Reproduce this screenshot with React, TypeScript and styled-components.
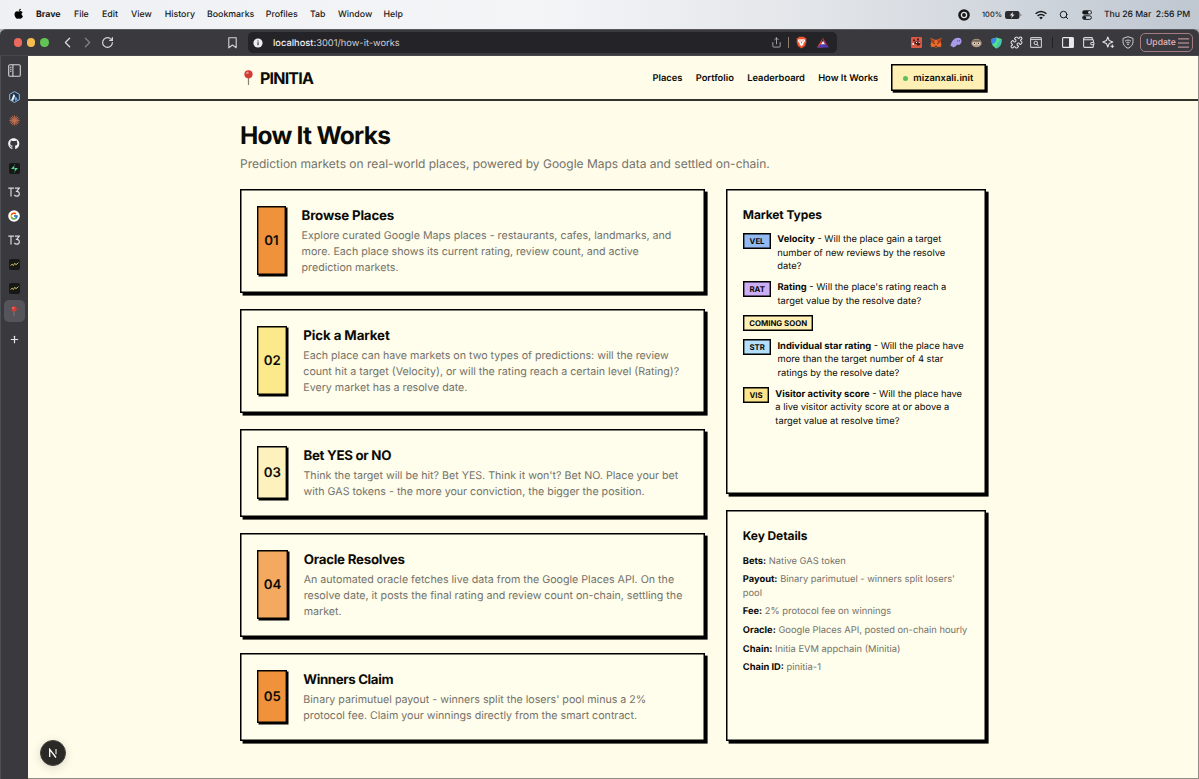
import React from "react";
import styled, { createGlobalStyle } from "styled-components";
import {
  ChevronLeft, ChevronRight, RotateCw, Share, Puzzle,
  Wallet, Search, Plus,
} from "lucide-react";
import { FaApple, FaGithub } from "react-icons/fa";
import { FcGoogle } from "react-icons/fc";

const GlobalStyle = createGlobalStyle`
  *, *::before, *::after { box-sizing: border-box; }
  html, body { margin: 0; padding: 0; overflow: hidden; background: #3a393e; }
  body {
    font-family: Inter, "Liberation Sans", sans-serif;
    color: #0b0b08;
    text-rendering: geometricPrecision;
    -webkit-font-smoothing: antialiased;
  }
  h1, h2, p { margin: 0; }
  svg { display: block; flex: none; }
`;

const Screen = styled.div`
  width: 1199px;
  height: 779px;
  display: flex;
  flex-direction: column;
`;

/* ---------- system menu bar ---------- */
const MenuBar = styled.div`
  height: 29px;
  flex: none;
  display: flex;
  align-items: center;
  padding: 0 11px 0 13px;
  background: linear-gradient(90deg, #eff0f3 0%, #f4f5f7 45%, #e2e5e9 68%, #bfc7d1 100%);
  font-size: 8.8px;
  color: #17181a;
`;
const MenuItem = styled.span<{ $w: number; $bold?: boolean }>`
  width: ${(p) => p.$w}px;
  font-weight: ${(p) => (p.$bold ? 700 : 500)};
  white-space: nowrap;
`;
const AppleCell = styled.span`
  width: 23px;
  padding-bottom: 1px;
`;
const MenuStatus = styled.div`
  margin-left: auto;
  display: flex;
  align-items: center;
`;
const StatusCell = styled.span<{ $gap: number }>`
  margin-right: ${(p) => p.$gap}px;
  font-size: 7.4px;
  font-weight: 500;
`;
const Clock = styled.span`
  width: 84px;
  font-weight: 500;
  font-size: 8.7px;
  letter-spacing: -0.05px;
  white-space: pre;
`;

/* ---------- browser tool bar ---------- */
const Toolbar = styled.div`
  height: 27px;
  flex: none;
  display: flex;
  align-items: center;
  padding: 0 6px 0 11px;
  background: #3a393e;
  border-top: 1px solid #57565b;
  border-bottom: 1px solid #48474b;
  border-radius: 6px 6px 0 0;
  color: #dcdce0;
`;
const ToolbarBack = styled.div`
  background: #a9b0b9;
  flex: none;
`;
const Light = styled.span<{ $c: string }>`
  width: 8.4px;
  height: 8.4px;
  margin: 0 2.5px;
  border-radius: 50%;
  background: ${(p) => p.$c};
`;
const Cell = styled.span<{ $dim?: boolean }>`
  width: 20px;
  display: flex;
  flex: none;
  justify-content: center;
  align-items: center;
  opacity: ${(p) => (p.$dim ? 0.45 : 1)};
`;
const Lights = styled.div`
  display: flex;
  width: 46px;
  align-items: center;
`;
const NavGroup = styled.div`
  display: flex;
  width: 165px;
`;
const AddressBar = styled.div`
  width: 589px;
  height: 21px;
  margin-left: 6px;
  display: flex;
  align-items: center;
  background: #242328;
  border-radius: 5px;
  padding: 0 4px 0 5px;
`;
const Url = styled.span`
  font-size: 9.3px;
  margin-left: 10px;
  padding-top: 1px;
  color: #cfced3;
  b { font-weight: 500; color: #f0eff3; }
`;
const AddressTools = styled.div`
  margin-left: auto;
  display: flex;
  align-items: center;
  gap: 2px;
`;
const Rule = styled.span<{ $h: number; $c: string }>`
  width: 1px;
  height: ${(p) => p.$h}px;
  background: ${(p) => p.$c};
`;
const Extensions = styled.div`
  display: flex;
  align-items: center;
  margin-left: auto;
`;
const ExtensionRule = styled(Rule)`
  margin: 0 5px 0 6px;
`;
const UpdateButton = styled.span`
  width: 53px;
  height: 19px;
  margin-left: 2px;
  display: flex;
  align-items: center;
  justify-content: space-between;
  padding: 0 3px 0 5px;
  border: 1px solid #a47c82;
  border-radius: 5px;
  font-size: 8.6px;
  font-weight: 500;
  color: #e3b4ba;
`;

/* ---------- side rail ---------- */
const Body = styled.div`
  flex: 1;
  min-height: 0;
  display: flex;
`;
const Rail = styled.div`
  width: 28px;
  flex: none;
  display: flex;
  flex-direction: column;
  align-items: center;
  background: #3a393e;
  border-left: 1px solid #4d5055;
  padding: 2px 1px 0 0;
  color: #e6e6ea;
`;
const RailItem = styled.span<{ $h?: number; $active?: boolean }>`
  width: 21px;
  height: ${(p) => p.$h ?? 24}px;
  flex: none;
  display: flex;
  align-items: center;
  justify-content: center;
  border-radius: 5px;
  background: ${(p) => (p.$active ? "#55545a" : "transparent")};
`;
const DarkTile = styled.span`
  width: 11px;
  height: 11px;
  display: flex;
  align-items: center;
  justify-content: center;
  border-radius: 2px;
  background: #161817;
`;

/* ---------- page ---------- */
const Page = styled.div`
  flex: 1;
  min-width: 0;
  background: #fffcea;
  border-right: 1px solid #8e8d86;
  border-bottom: 1px solid #8e8d86;
  position: relative;
`;
const Header = styled.header`
  height: 45px;
  border-bottom: 2px solid #35342c;
  padding: 0 212px 0 212px;
  display: flex;
  align-items: center;
`;
const Logo = styled.div`
  display: flex;
  align-items: center;
  gap: 7px;
  padding-left: 4px;
  font-size: 16px;
  font-weight: 700;
  letter-spacing: -0.8px;
`;
const Nav = styled.nav`
  margin-left: auto;
  display: flex;
  align-items: center;
  gap: 13.3px;
  font-size: 9.33px;
  font-weight: 600;
`;
const NavLink = styled.span`
  padding-top: 1px;
`;
const WalletButton = styled.span`
  width: 95.5px;
  height: 26.5px;
  margin-left: -1px;
  display: flex;
  align-items: center;
  padding: 1px 0 0 12px;
  gap: 5.7px;
  background: #feefb5;
  box-shadow: inset 0 0 0 1.5px #000, 1.7px 1.7px 0 #000;
  letter-spacing: 0.05px;
  white-space: nowrap;
`;
const OnlineDot = styled.i`
  width: 5px;
  height: 5px;
  border-radius: 50%;
  background: #5bbf60;
`;
const Main = styled.main`
  padding: 19px 0 0 212px;
  width: 958px;
`;
const Title = styled.h1`
  font-size: 24.5px;
  line-height: 31px;
  font-weight: 700;
  letter-spacing: -0.75px;
`;
const Subtitle = styled.p`
  font-size: 12px;
  line-height: 18px;
  margin-top: 4px;
  color: #74726a;
`;
const Columns = styled.div`
  display: grid;
  grid-template-columns: 464.5px 260.5px;
  column-gap: 21px;
  margin-top: 15.5px;
`;
const Stack = styled.div`
  display: flex;
  flex-direction: column;
  gap: 16px;
`;
const Card = styled.section<{ $h: number }>`
  height: ${(p) => p.$h}px;
  padding: 17px 17px 17px 17.3px;
  background: #fffdeb;
  box-shadow: inset 0 0 0 1.5px #000, 2.6px 2.6px 0 #000;
`;
const StepCard = styled(Card)`
  display: flex;
`;
const StepNumber = styled.div<{ $c: string; $w: number }>`
  width: ${(p) => p.$w}px;
  height: calc(100% - 1px);
  margin-right: 16px;
  padding-top: 1px;
  flex: none;
  display: flex;
  align-items: center;
  justify-content: center;
  background: ${(p) => p.$c};
  box-shadow: inset 0 0 0 1.4px #000, 1.5px 1.5px 0 #000;
  font-size: 13.3px;
  font-weight: 600;
`;
const StepBody = styled.div`
  padding-top: 1px;
`;
const StepTitle = styled.h2<{ $ls: number }>`
  font-size: 13.3px;
  line-height: 19px;
  font-weight: 700;
  letter-spacing: ${(p) => p.$ls}px;
  margin-bottom: 2px;
  white-space: nowrap;
`;
const StepText = styled.p`
  font-size: 10.667px;
  line-height: 16px;
  color: #74726a;
  white-space: nowrap;
`;
const SideTitle = styled.h2`
  font-size: 12px;
  line-height: 18px;
  font-weight: 700;
  letter-spacing: -0.1px;
  margin-bottom: 9px;
`;
const MarketList = styled.div`
  display: flex;
  flex-direction: column;
  align-items: flex-start;
  gap: 8px;
`;
const MarketRow = styled.div`
  display: flex;
  align-items: flex-start;
  gap: 6px;
`;
const Tag = styled.span<{ $c: string; $w: number }>`
  width: ${(p) => p.$w}px;
  height: 16px;
  flex: none;
  display: flex;
  align-items: center;
  justify-content: center;
  background: ${(p) => p.$c};
  box-shadow: inset 0 0 0 1.4px #000;
  font-size: 7.8px;
  font-weight: 700;
  white-space: nowrap;
`;
const DetailText = styled.p`
  font-size: 9.333px;
  line-height: 13.35px;
  white-space: nowrap;
  b { font-weight: 700; }
`;
const MarketText = styled(DetailText)`
  padding-top: 0.8px;
  margin-bottom: -0.8px;
`;
const Details = styled.div`
  display: flex;
  flex-direction: column;
  gap: 5.3px;
  padding-top: 0.8px;
`;
const Detail = styled(DetailText)`
  color: #74726a;
  b { color: #0b0b08; }
`;
const DevBadge = styled.div`
  position: absolute;
  left: 12px;
  bottom: 12px;
  width: 26px;
  height: 26px;
  display: flex;
  align-items: center;
  justify-content: center;
  border-radius: 50%;
  background: #2a2926;
  border: 1px solid #45443c;
  box-shadow: 0 2px 10px rgba(0, 0, 0, 0.14);
`;

const Lines = ({ text }: { text: string }) => (
  <>
    {text.split("\n").map((line, i) => (
      <React.Fragment key={i}>
        {i > 0 && <br />}
        <span>{line}</span>
      </React.Fragment>
    ))}
  </>
);

const Pin = ({ h }: { h: number }) => (
  <svg height={h} width={(h * 9) / 15} viewBox="0 0 9 15">
    <path d="M4.5 7v7.4" stroke="#8c8179" strokeWidth="1.2" strokeLinecap="round" />
    <circle cx="4.5" cy="4.3" r="4.1" fill="#d23c35" />
    <ellipse cx="3.4" cy="2.9" rx="1.5" ry="1.1" fill="#ee8c83" />
  </svg>
);

const Spark = () => (
  <DarkTile>
    <svg width="9" height="7" viewBox="0 0 9 7" fill="none" stroke="#c7bd5c" strokeWidth="1">
      <path d="M.5 4.6 2.2 3.2 3.3 4.6 4.8 2.2 5.9 3.8 8.5 1.6" />
    </svg>
  </DarkTile>
);

const TLogo = () => (
  <svg width="12" height="10" viewBox="0 0 12 10" fill="none" stroke="#d8d8dc" strokeWidth="1.2">
    <path d="M.3 1.2h5.9M3 1.2v8.3M7 1.2h4.2L8.7 4.4c1.5-.1 2.6.9 2.6 2.3 0 1.5-1.2 2.5-2.6 2.5-1.1 0-1.9-.5-2.4-1.3" />
  </svg>
);

const menus: [string, number][] = [
  ["Brave", 38], ["File", 28], ["Edit", 29], ["View", 33.7], ["History", 42.3],
  ["Bookmarks", 58.8], ["Profiles", 44.2], ["Tab", 28], ["Window", 45.5], ["Help", 30],
];

type Step = { n: string; w: number; c: string; h: number; ls: number; title: string; text: string };
const steps: Step[] = [
  { n: "01", w: 28.3, c: "#f0923b", h: 104, ls: -0.18, title: "Browse Places",
    text: "Explore curated Google Maps places - restaurants, cafes, landmarks, and\nmore. Each place shows its current rating, review count, and active\nprediction markets." },
  { n: "02", w: 30, c: "#fbe98b", h: 104, ls: -0.1, title: "Pick a Market",
    text: "Each place can have markets on two types of predictions: will the review\ncount hit a target (Velocity), or will the rating reach a certain level (Rating)?\nEvery market has a resolve date." },
  { n: "03", w: 30.2, c: "#fdf1bd", h: 88, ls: -0.3, title: "Bet YES or NO",
    text: "Think the target will be hit? Bet YES. Think it won't? Bet NO. Place your bet\nwith GAS tokens - the more your conviction, the bigger the position." },
  { n: "04", w: 30.4, c: "#f3a95f", h: 104, ls: -0.24, title: "Oracle Resolves",
    text: "An automated oracle fetches live data from the Google Places API. On the\nresolve date, it posts the final rating and review count on-chain, settling the\nmarket." },
  { n: "05", w: 30, c: "#f0923b", h: 88, ls: -0.38, title: "Winners Claim",
    text: "Binary parimutuel payout - winners split the losers' pool minus a 2%\nprotocol fee. Claim your winnings directly from the smart contract." },
];

const details: [string, string][] = [
  ["Bets:", "Native GAS token"],
  ["Payout:", "Binary parimutuel - winners split losers'\npool"],
  ["Fee:", "2% protocol fee on winnings"],
  ["Oracle:", "Google Places API, posted on-chain hourly"],
  ["Chain:", "Initia EVM appchain (Minitia)"],
  ["Chain ID:", "pinitia-1"],
];

function SystemBar() {
  return (
    <MenuBar>
      <AppleCell><FaApple size={11.5} color="#000" /></AppleCell>
      {menus.map(([name, w], i) => (
        <MenuItem key={name} $w={w} $bold={i === 0}>{name}</MenuItem>
      ))}
      <MenuStatus>
        <StatusCell $gap={12}>
          <svg width="12" height="12" viewBox="0 0 12 12">
            <circle cx="6" cy="6" r="5.8" fill="#17181a" />
            <circle cx="6" cy="6" r="2.6" fill="none" stroke="#e4e7ea" strokeWidth="1.3" />
          </svg>
        </StatusCell>
        <StatusCell $gap={3}>100%</StatusCell>
        <StatusCell $gap={13}>
          <svg width="17" height="8" viewBox="0 0 17 8">
            <rect x="0" y="0" width="14.5" height="8" rx="2.2" fill="#2a2c2f" />
            <path d="M15.4 2.7v2.6c.8-.2 1.1-.7 1.1-1.3s-.3-1.1-1.1-1.3z" fill="#6f757c" />
            <path d="M8.3.4 4.6 4.5h2.2L6 7.6l3.8-4.2H7.6z" fill="#f4f5f6" stroke="#2a2c2f" strokeWidth=".3" />
          </svg>
        </StatusCell>
        <StatusCell $gap={12}>
          <svg width="12" height="10" viewBox="0 0 12 10" fill="none" stroke="#17181a" strokeWidth="1.5">
            <path d="M.6 3.7c3.1-3.1 7.7-3.1 10.8 0M2.6 5.900c1.9-1.9 4.900-1.9 6.8 0" />
            <path d="M4.2 7.5c1-1 2.6-1 3.600 0L6 9.400z" fill="#17181a" stroke="none" />
          </svg>
        </StatusCell>
        <StatusCell $gap={13}><Search size={10} strokeWidth={2.4} /></StatusCell>
        <StatusCell $gap={12}>
          <svg width="10" height="10" viewBox="0 0 10 10">
            <rect x=".2" y=".3" width="9.6" height="4.3" rx="2.15" fill="#17181a" />
            <circle cx="7.5" cy="2.45" r="1.4" fill="#d3d8de" />
            <rect x=".6" y="5.8" width="8.8" height="3.6" rx="1.8" fill="none" stroke="#17181a" strokeWidth="1" />
            <circle cx="2.6" cy="7.6" r="1.6" fill="#17181a" />
          </svg>
        </StatusCell>
        <Clock>{"Thu 26 Mar  2:56 PM"}</Clock>
      </MenuStatus>
    </MenuBar>
  );
}

function BrowserBar() {
  return (
    <ToolbarBack>
      <Toolbar>
        <Lights>
          <Light $c="#ed6a5f" /><Light $c="#f5be4f" /><Light $c="#61c455" />
        </Lights>
        <NavGroup>
          <Cell><ChevronLeft size={17} strokeWidth={1.7} /></Cell>
          <Cell $dim><ChevronRight size={17} strokeWidth={1.7} /></Cell>
          <Cell><RotateCw size={13} strokeWidth={2.1} /></Cell>
        </NavGroup>
        <Cell>
          <svg width="9" height="12" viewBox="0 0 9 12" fill="none" stroke="#d5d5d9" strokeWidth="1.1">
            <path d="M.8.8h7.4v10L4.5 8 .8 10.8z" strokeLinejoin="round" />
          </svg>
        </Cell>
        <AddressBar>
          <svg width="10" height="10" viewBox="0 0 10 10">
            <circle cx="5" cy="5" r="4.6" fill="#eeeef0" />
            <path d="M5 4.3v3M5 2.4v1" stroke="#242328" strokeWidth="1.1" />
          </svg>
          <Url><b>localhost:</b>3001/how-it-works</Url>
          <AddressTools>
            <Cell><Share size={11} strokeWidth={1.8} color="#b9b8bd" /></Cell>
            <Rule $h={11} $c="#8d7d70" />
            <Cell>
              <svg width="11" height="13" viewBox="0 0 11 13">
                <path d="M3 .8h5l1 1.2 1.4.2-.3 2 .4 1.3-1.4 4.5L5.5 12.5 1.9 10 .5 5.5l.4-1.3-.3-2L2 2z" fill="#f0532d" />
                <path d="M2.2 3.5 4 3.2l1.5.4L7 3.2l1.8.3.3 1.6-1.8 2.4.2 1-2 1.7-2-1.7.2-1L1.9 5.1z" fill="#fff" />
                <path d="M3.3 4.7l1.4.4M7.7 4.7l-1.4.4M5.5 5.5v2" stroke="#f0532d" strokeWidth=".8" />
              </svg>
            </Cell>
            <Cell>
              <svg width="12" height="11" viewBox="0 0 12 11">
                <path d="M6 .5 0 10.5h6V7.3H4z" fill="#e2452c" />
                <path d="M6 .5 12 10.5 8 7.3 6 4.2z" fill="#9c2a63" />
                <path d="M0 10.5h12L8 7.3H4z" fill="#4c3dbd" />
                <path d="M6 3.9 8 7.3H4z" fill="#fff" />
              </svg>
            </Cell>
          </AddressTools>
        </AddressBar>
        <Extensions>
          <Cell>
            <svg width="11" height="11" viewBox="0 0 11 11">
              <rect width="11" height="11" rx="1" fill="#d95745" />
              <path d="M2 2.5h2V4H2zM6 1.5h2v2H6zM3.5 4.5h5l1 1.5-1 2.5H6L5.5 7h-2z" fill="#40211e" />
              <path d="M1.5 6h1.5v2H1.5zM5 5h1v1H5zM7.7 5h1v1h-1z" fill="#fff" />
            </svg>
          </Cell>
          <Cell>
            <svg width="12" height="11" viewBox="0 0 12 11">
              <path d="M.6.7 4.6 2.7h2.8L11.4.7l-.6 4.6.7 2.5-1 2.5-2.6-.6-1 .9H5.1l-1-.9-2.6.6-1-2.5.7-2.5z" fill="#ec6a2a" />
              <path d="M.6.7 5 4 3.5 6.4 1.2 5.3zM11.4.7 7 4l1.5 2.4 2.3-1.1z" fill="#a9421e" />
              <path d="M3 6.3h2L4.6 7.3zM9 6.3H7l.4 1zM5 8.8h2l.2 1H4.8z" fill="#2c2321" />
            </svg>
          </Cell>
          <Cell>
            <svg width="12" height="11" viewBox="0 0 12 11">
              <path d="M.5 8.7C1.5 4 4.5.8 8 .8c2.5 0 3.8 1.7 3.5 3.8-.3 2-1.7 3.4-3.3 3.4-.6 0-.9-.2-1.1-.5C6 9.2 4.7 10.2 3.5 10.2c-1 0-1.4-.6-1.3-1.3-.6.4-1.4.5-1.7-.2z" fill="#a99bea" />
              <path d="M7.7 3.2v1.3M9.5 3.2v1.3" stroke="#4a4187" strokeWidth=".8" />
            </svg>
          </Cell>
          <Cell>
            <svg width="11" height="10" viewBox="0 0 12 10">
              <ellipse cx="6" cy="5" rx="5.6" ry="4.7" fill="#b39d88" />
              <path d="M1 3.5C2 .5 10 .5 11 3.5z" fill="#7a6a5d" />
              <circle cx="3.8" cy="5.2" r="1.7" fill="#eee5d6" /><circle cx="8.2" cy="5.2" r="1.7" fill="#eee5d6" />
              <circle cx="3.9" cy="5.2" r=".8" fill="#222" /><circle cx="8.1" cy="5.2" r=".8" fill="#222" />
            </svg>
          </Cell>
          <Cell>
            <svg width="11" height="12" viewBox="0 0 11 12">
              <path d="M5.5.5 10.5 2c.3 4.8-1 7.5-5 9.5C1.5 9.5.2 6.8.5 2z" fill="#54e18a" />
              <path d="M5.5.5.5 2c-.1 2 .1 3.6.7 5C4 6.5 5.5 4.5 5.5.5z" fill="#3f82ee" />
              <path d="M10.5 2c.3 4.8-1 7.5-5 9.5C5 7 7.5 4 10.5 2z" fill="#43c8ae" />
            </svg>
          </Cell>
          <Cell><Puzzle size={13} strokeWidth={2} /></Cell>
          <Cell>
            <svg width="12" height="11" viewBox="0 0 12 11" fill="none" stroke="#c9c8ce" strokeWidth="1.1">
              <rect x=".6" y=".6" width="10.8" height="9.8" rx="1" /><path d="M.6 2.5h10.8" />
              <circle cx="5.8" cy="6" r="1.7" /><path d="m7 7.3 1.5 1.5" />
            </svg>
          </Cell>
          <ExtensionRule $h={11} $c="#232226" />
          <Cell>
            <svg width="12" height="11" viewBox="0 0 12 11">
              <rect x=".6" y=".6" width="10.8" height="9.8" rx="1" fill="none" stroke="#e9e9ec" strokeWidth="1.1" />
              <rect x="7" y=".6" width="4.4" height="9.8" fill="#e9e9ec" />
            </svg>
          </Cell>
          <Cell><Wallet size={13} strokeWidth={2} /></Cell>
          <Cell>
            <svg width="13" height="13" viewBox="0 0 13 13" fill="none" stroke="#e2e2e6" strokeWidth="1.1" strokeLinejoin="round">
              <path d="M5.8 1 7.2 4.6 10.8 6 7.2 7.4 5.8 11 4.4 7.4.8 6l3.6-1.4z" />
              <path d="M10.3 8.5v3.6M8.5 10.3h3.6" />
            </svg>
          </Cell>
          <Cell>
            <svg width="12" height="13" viewBox="0 0 12 13" fill="none" stroke="#cfced3" strokeWidth="1">
              <path d="M6 .7 11 2.4v3.3c0 3-2 5.2-5 6.6-3-1.4-5-3.6-5-6.6V2.4z" />
              <path d="M3 5.2c1.8-1.5 4.2-1.5 6 0M4.3 6.8c1-.8 2.4-.8 3.4 0" /><circle cx="6" cy="8.3" r=".5" fill="#cfced3" />
            </svg>
          </Cell>
          <UpdateButton>Update
            <svg width="11" height="10" viewBox="0 0 11 10" stroke="#d6a7ad" strokeWidth="1"><path d="M0 .9h11M0 5h11M0 9.1h11" /></svg>
          </UpdateButton>
        </Extensions>
      </Toolbar>
    </ToolbarBack>
  );
}

function SideRail() {
  return (
    <Rail>
      <RailItem $h={25}>
        <svg width="13" height="13" viewBox="0 0 13 13" fill="none" stroke="#d5d5d9" strokeWidth="1.1">
          <rect x=".7" y=".7" width="11.6" height="11.6" rx="1.4" /><path d="M4.9.7v11.6M2 3.2h1.5M2 5.2h1.5M2 7.2h1.5" />
        </svg>
      </RailItem>
      <RailItem $h={27}>
        <svg width="11" height="12" viewBox="0 0 11 12">
          <path d="M5.5.6 10.3 3.3v5.4L5.5 11.4.7 8.7V3.3z" fill="#213147" stroke="#93bbdc" strokeWidth="1" />
          <path d="M4.8 2.8 6.2 5 4 10 2.2 8.9z" fill="#e8f2fa" /><path d="M6.8 5.2 8.7 8.6 6.5 9.9 5.5 8z" fill="#6ea9dc" />
        </svg>
      </RailItem>
      <RailItem $h={21}>
        <svg width="11" height="11" viewBox="-5.5 -5.5 11 11" stroke="#c6714f" strokeWidth=".85">
          <path d="M0-5V5M-5 0H5M-3.6-3.6 3.6 3.6M-3.6 3.6 3.6-3.6M-2-4.7 2 4.7M2-4.7-2 4.7M-4.7-2 4.7 2M-4.7 2 4.7-2" />
        </svg>
      </RailItem>
      <RailItem $h={26}><FaGithub size={11.5} color="#f5f5f7" /></RailItem>
      <RailItem $h={22}>
        <DarkTile><svg width="9" height="9" viewBox="0 0 9 9"><path d="M5.2.6 1 5.1h3.3V.6zM3.9 8.4 8 3.9H4.7v4.5z" fill="#55d694" /></svg></DarkTile>
      </RailItem>
      <RailItem $h={25}><TLogo /></RailItem>
      <RailItem $h={24}>
        <svg width="12" height="12" viewBox="0 0 12 12"><circle cx="6" cy="6" r="5.8" fill="#fff" /><g transform="translate(1.7 1.7)"><FcGoogle size={8.6} /></g></svg>
      </RailItem>
      <RailItem><TLogo /></RailItem>
      <RailItem><Spark /></RailItem>
      <RailItem><Spark /></RailItem>
      <RailItem $h={22} $active><Pin h={10} /></RailItem>
      <RailItem $h={34}><Plus size={11} strokeWidth={2.6} /></RailItem>
    </Rail>
  );
}

export default function App() {
  return (
    <Screen>
      <GlobalStyle />
      <SystemBar />
      <BrowserBar />
      <Body>
        <SideRail />
        <Page>
          <Header>
            <Logo><Pin h={15} />PINITIA</Logo>
            <Nav>
              <NavLink>Places</NavLink><NavLink>Portfolio</NavLink>
              <NavLink>Leaderboard</NavLink><NavLink>How It Works</NavLink>
              <WalletButton><OnlineDot />mizanxali.init</WalletButton>
            </Nav>
          </Header>
          <Main>
            <Title>How It Works</Title>
            <Subtitle>Prediction markets on real-world places, powered by Google Maps data and settled on-chain.</Subtitle>
            <Columns>
              <Stack>
                {steps.map((s) => (
                  <StepCard key={s.n} $h={s.h}>
                    <StepNumber $c={s.c} $w={s.w}>{s.n}</StepNumber>
                    <StepBody>
                      <StepTitle $ls={s.ls}>{s.title}</StepTitle>
                      <StepText><Lines text={s.text} /></StepText>
                    </StepBody>
                  </StepCard>
                ))}
              </Stack>
              <Stack>
                <Card $h={305.5}>
                  <SideTitle>Market Types</SideTitle>
                  <MarketList>
                    <MarketRow>
                      <Tag $c="#93b9f3" $w={28.5}>VEL</Tag>
                      <MarketText><b>Velocity</b> <Lines text={"- Will the place gain a target\nnumber of new reviews by the resolve\ndate?"} /></MarketText>
                    </MarketRow>
                    <MarketRow>
                      <Tag $c="#cbaef5" $w={28.7}>RAT</Tag>
                      <MarketText><b>Rating</b> <Lines text={"- Will the place's rating reach a\ntarget value by the resolve date?"} /></MarketText>
                    </MarketRow>
                    <Tag $c="#feefb5" $w={70.7}>COMING SOON</Tag>
                    <MarketRow>
                      <Tag $c="#b4dffb" $w={28.7}>STR</Tag>
                      <MarketText><b>Individual star rating</b> <Lines text={"- Will the place have\nmore than the target number of 4 star\nratings by the resolve date?"} /></MarketText>
                    </MarketRow>
                    <MarketRow>
                      <Tag $c="#fbe48a" $w={26.5}>VIS</Tag>
                      <MarketText><b>Visitor activity score</b> <Lines text={"- Will the place have\na live visitor activity score at or above a\ntarget value at resolve time?"} /></MarketText>
                    </MarketRow>
                  </MarketList>
                </Card>
                <Card $h={230.5}>
                  <SideTitle>Key Details</SideTitle>
                  <Details>
                    {details.map(([k, v]) => (
                      <Detail key={k}><b>{k}</b> <Lines text={v} /></Detail>
                    ))}
                  </Details>
                </Card>
              </Stack>
            </Columns>
          </Main>
          <DevBadge>
            <svg width="10" height="10" viewBox="0 0 10 10" fill="none" stroke="#fff" strokeWidth="1.3">
              <path d="M1.7 9V1.4L8 9.5" /><path d="M8 1v5.2" strokeOpacity=".8" />
            </svg>
          </DevBadge>
        </Page>
      </Body>
    </Screen>
  );
}
